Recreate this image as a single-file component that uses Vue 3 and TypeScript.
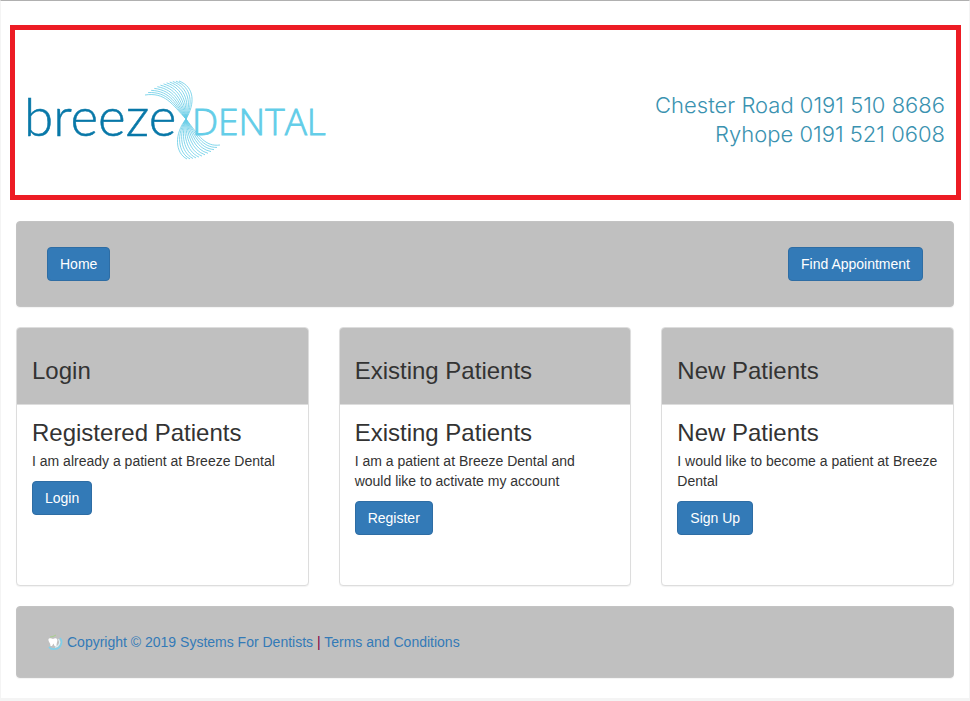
<script setup lang="ts">
interface Panel {
  heading: string
  title: string
  text: string
  action: string
}

const panels: Panel[] = [
  { heading: 'Login', title: 'Registered Patients', text: 'I am already a patient at Breeze Dental', action: 'Login' },
  { heading: 'Existing Patients', title: 'Existing Patients', text: 'I am a patient at Breeze Dental and would like to activate my account', action: 'Register' },
  { heading: 'New Patients', title: 'New Patients', text: 'I would like to become a patient at Breeze Dental', action: 'Sign Up' },
]

// Strands of the logo's ribbon, fanned between an inner and an outer curve.
const strandCount = 12
const mix = (a: number, b: number, t: number): string => (a + (b - a) * t).toFixed(2)

const strands: string[] = Array.from({ length: strandCount }, (_, i) => {
  const t = i / (strandCount - 1)
  const bow = 14 * (1 - t) ** 2
  const upper = `M${mix(118, 152, t)} ${(1 + bow).toFixed(2)}C${mix(138, 168, t)} ${mix(12, 7, t)} ${mix(145, 168, t)} ${mix(24, 24, t)} 159 39`
  const lower = `C${mix(172, 147, t)} ${mix(56, 54, t)} ${mix(178, 148, t)} ${mix(67, 73, t)} ${mix(193, 160, t)} ${(79 - bow).toFixed(2)}`
  return upper + lower
})
</script>

<template>
  <div class="page">
    <header class="banner">
      <svg class="logo" viewBox="0 0 300 80" role="img" aria-label="breeze DENTAL">
        <g class="strands">
          <path v-for="(d, i) in strands" :key="i" :d="d" />
        </g>
        <text class="logo-name" x="-3" y="56">breeze</text>
        <text class="logo-kind" x="165" y="55">DENTAL</text>
      </svg>
      <address class="phones">
        <span>Chester Road 0191 510 8686</span>
        <span>Ryhope 0191 521 0608</span>
      </address>
    </header>

    <nav class="well nav">
      <button type="button" class="btn">Home</button>
      <button type="button" class="btn">Find Appointment</button>
    </nav>

    <main class="panels">
      <section v-for="panel in panels" :key="panel.heading" class="panel">
        <div class="panel-heading"><h3>{{ panel.heading }}</h3></div>
        <div class="panel-body">
          <h3>{{ panel.title }}</h3>
          <p>{{ panel.text }}</p>
          <button type="button" class="btn">{{ panel.action }}</button>
        </div>
      </section>
    </main>

    <footer class="well footer">
      <svg class="tooth" viewBox="0 0 16 16" aria-hidden="true">
        <path d="M13 4C16.500 8 13.500 14.500 8 15C5 15.500 3 14.500 2 13" fill="none" stroke="#7fd0ea" stroke-width="1.6" />
        <path d="M11.500 5C14 8.500 12 12.500 8 13.200" fill="none" stroke="#d8f1f8" stroke-width="1.2" />
        <path d="M3 3L6 2.500L9 1" fill="none" stroke="#a9cf8d" stroke-width="1" />
        <path d="M1.500 5C2.500 3.500 5 5 6 5C7 5 9 3.500 10 5C11 7 9.500 8 9.500 12H7.500L6.500 9.500L5 12H3.500C3.500 8.500 1 7.500 1.500 5Z" fill="#fff" />
      </svg>
      <span><a href="#">Copyright © 2019 Systems For Dentists</a> <span class="divider">|</span> <a href="#">Terms and Conditions</a></span>
    </footer>
  </div>
</template>

<style>
body {
  background: #f4f4f4;
}
</style>

<style scoped>
* {
  box-sizing: border-box;
}

.page {
  display: flex;
  flex-direction: column;
  gap: 20px;
  padding: 24px 15px 20px;
  border: 1px solid #f4f4f4;
  border-top-color: #b0b0b0;
  border-bottom: 0;
  background: #fff;
  color: #333;
  font: 14px/20px "Liberation Sans", Arial, sans-serif;
}

.banner {
  display: flex;
  justify-content: space-between;
  align-items: center;
  margin: 0 -7px 1px -6px;
  padding: 50px 11px 35px 12px;
  border: 5px solid #ed1c24;
}

.logo {
  width: 300px;
  height: 80px;
  overflow: visible;
}

.strands {
  fill: none;
  stroke: #64cbe6;
  stroke-width: 0.8;
}

.logo-name {
  fill: #0878a8;
  stroke: #0878a8;
  stroke-width: 0.5;
  font: 300 53px Lato, sans-serif;
}

.logo-kind {
  fill: #62cde8;
  stroke: #62cde8;
  stroke-width: 0.8;
  font: 300 37px "Open Sans", sans-serif;
}

.phones {
  display: flex;
  flex-direction: column;
  align-items: flex-end;
  color: #3a92b0;
  font: 300 22px/29px Inter, sans-serif;
}

.well {
  display: flex;
  align-items: center;
  border: 1px solid #c3c3c3;
  border-radius: 4px;
  background: #c0c0c0;
  box-shadow: 0 1px 1px rgba(0, 0, 0, 0.05);
}

.nav {
  justify-content: space-between;
  padding: 25px 30px;
}

.btn {
  padding: 6px 12px;
  border: 1px solid #2e6da4;
  border-radius: 4px;
  background: #337ab7;
  color: #fff;
  font: inherit;
  cursor: pointer;
}

.panels {
  display: grid;
  grid-template-columns: repeat(3, 1fr);
  gap: 30px;
}

.panel {
  min-height: 259px;
  border: 1px solid #ddd;
  border-radius: 4px;
  background: #fff;
  box-shadow: 0 1px 1px rgba(0, 0, 0, 0.05);
  overflow: hidden;
}

.panel-heading {
  padding: 30px 15px 20px;
  border-bottom: 1px solid #ddd;
  background: #c0c0c0;
}

.panel-body {
  padding: 15px;
}

h3 {
  margin: 0;
  font-size: 24px;
  font-weight: 400;
  line-height: 26px;
}

p {
  margin: 5px 0 10px;
}

.footer {
  gap: 4px;
  padding: 25px 30px;
}

.tooth {
  width: 16px;
  height: 16px;
}

a {
  color: #337ab7;
  text-decoration: none;
}

.divider {
  color: #800040;
}
</style>
